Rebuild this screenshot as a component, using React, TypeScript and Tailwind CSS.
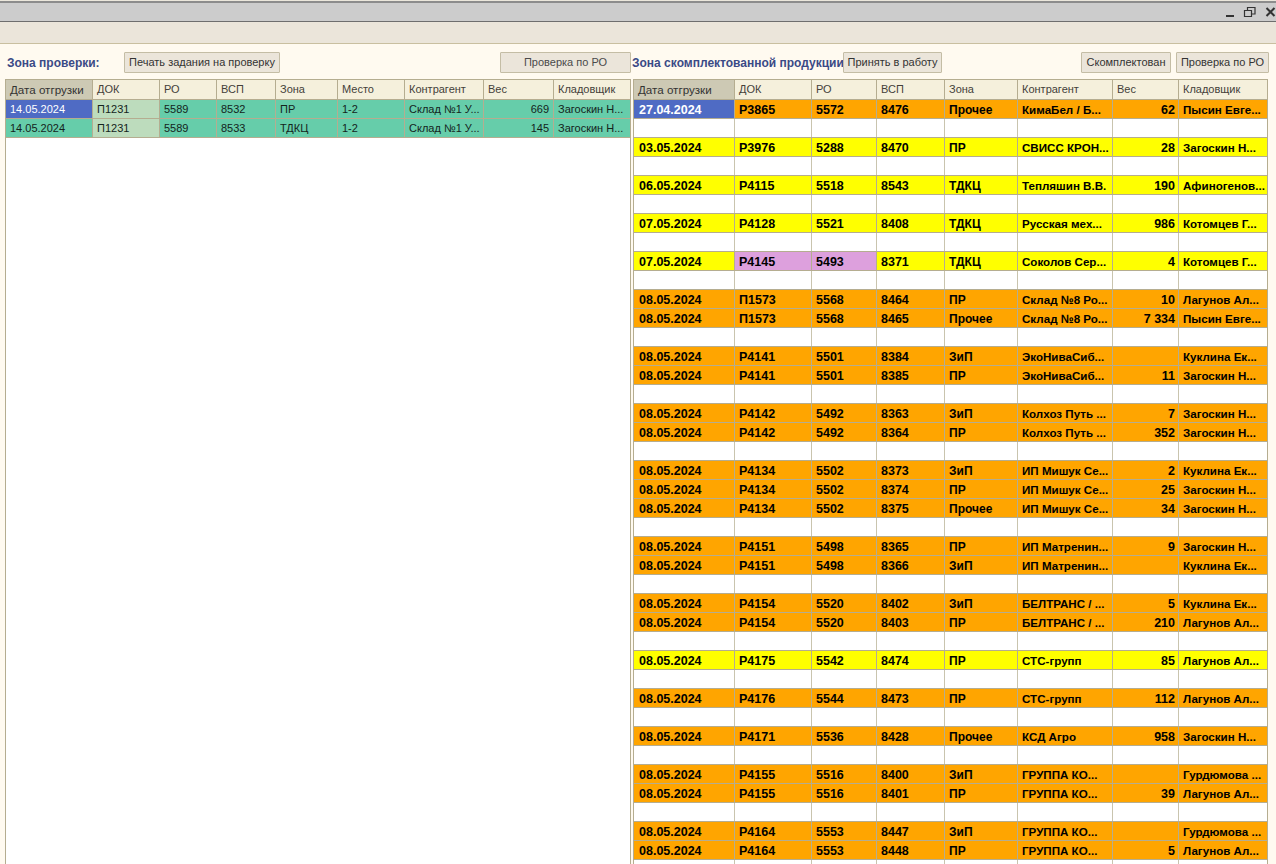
const SANS = "font-['Liberation_Sans',Arial,sans-serif]";
const LC = 'grid-cols-[87px_67px_57px_59px_62px_67px_79px_70px_77px]';
const RC = 'grid-cols-[101px_77px_65px_68px_73px_95px_66px_89px]';

const leftHead = ['Дата отгрузки', 'ДОК', 'РО', 'ВСП', 'Зона', 'Место', 'Контрагент', 'Вес', 'Кладовщик'];
const rightHead = ['Дата отгрузки', 'ДОК', 'РО', 'ВСП', 'Зона', 'Контрагент', 'Вес', 'Кладовщик'];

const leftRows = [
  ['14.05.2024', 'П1231', '5589', '8532', 'ПР', '1-2', 'Склад №1 У...', '669', 'Загоскин Н...'],
  ['14.05.2024', 'П1231', '5589', '8533', 'ТДКЦ', '1-2', 'Склад №1 У...', '145', 'Загоскин Н...'],
];

type R = [string, string, string, string, string, string, string, string, string] | null;
const y = 'y', o = 'o', p = 'p';
const rightRows: R[] = [
  [o, '27.04.2024', 'Р3865', '5572', '8476', 'Прочее', 'КимаБел / Б...', '62', 'Пысин Евге...'],
  null,
  [y, '03.05.2024', 'Р3976', '5288', '8470', 'ПР', 'СВИСС КРОН...', '28', 'Загоскин Н...'],
  null,
  [y, '06.05.2024', 'Р4115', '5518', '8543', 'ТДКЦ', 'Тепляшин В.В.', '190', 'Афиногенов...'],
  null,
  [y, '07.05.2024', 'Р4128', '5521', '8408', 'ТДКЦ', 'Русская мех...', '986', 'Котомцев Г...'],
  null,
  [p, '07.05.2024', 'Р4145', '5493', '8371', 'ТДКЦ', 'Соколов Сер...', '4', 'Котомцев Г...'],
  null,
  [o, '08.05.2024', 'П1573', '5568', '8464', 'ПР', 'Склад №8 Ро...', '10', 'Лагунов Ал...'],
  [o, '08.05.2024', 'П1573', '5568', '8465', 'Прочее', 'Склад №8 Ро...', '7 334', 'Пысин Евге...'],
  null,
  [o, '08.05.2024', 'Р4141', '5501', '8384', 'ЗиП', 'ЭкоНиваСиб...', '', 'Куклина Ек...'],
  [o, '08.05.2024', 'Р4141', '5501', '8385', 'ПР', 'ЭкоНиваСиб...', '11', 'Загоскин Н...'],
  null,
  [o, '08.05.2024', 'Р4142', '5492', '8363', 'ЗиП', 'Колхоз Путь ...', '7', 'Загоскин Н...'],
  [o, '08.05.2024', 'Р4142', '5492', '8364', 'ПР', 'Колхоз Путь ...', '352', 'Загоскин Н...'],
  null,
  [o, '08.05.2024', 'Р4134', '5502', '8373', 'ЗиП', 'ИП Мишук Се...', '2', 'Куклина Ек...'],
  [o, '08.05.2024', 'Р4134', '5502', '8374', 'ПР', 'ИП Мишук Се...', '25', 'Загоскин Н...'],
  [o, '08.05.2024', 'Р4134', '5502', '8375', 'Прочее', 'ИП Мишук Се...', '34', 'Загоскин Н...'],
  null,
  [o, '08.05.2024', 'Р4151', '5498', '8365', 'ПР', 'ИП Матренин...', '9', 'Загоскин Н...'],
  [o, '08.05.2024', 'Р4151', '5498', '8366', 'ЗиП', 'ИП Матренин...', '', 'Куклина Ек...'],
  null,
  [o, '08.05.2024', 'Р4154', '5520', '8402', 'ЗиП', 'БЕЛТРАНС / ...', '5', 'Куклина Ек...'],
  [o, '08.05.2024', 'Р4154', '5520', '8403', 'ПР', 'БЕЛТРАНС / ...', '210', 'Лагунов Ал...'],
  null,
  [y, '08.05.2024', 'Р4175', '5542', '8474', 'ПР', 'СТС-групп', '85', 'Лагунов Ал...'],
  null,
  [o, '08.05.2024', 'Р4176', '5544', '8473', 'ПР', 'СТС-групп', '112', 'Лагунов Ал...'],
  null,
  [o, '08.05.2024', 'Р4171', '5536', '8428', 'Прочее', 'КСД Агро', '958', 'Загоскин Н...'],
  null,
  [o, '08.05.2024', 'Р4155', '5516', '8400', 'ЗиП', 'ГРУППА КО...', '', 'Гурдюмова ...'],
  [o, '08.05.2024', 'Р4155', '5516', '8401', 'ПР', 'ГРУППА КО...', '39', 'Лагунов Ал...'],
  null,
  [o, '08.05.2024', 'Р4164', '5553', '8447', 'ЗиП', 'ГРУППА КО...', '', 'Гурдюмова ...'],
  [o, '08.05.2024', 'Р4164', '5553', '8448', 'ПР', 'ГРУППА КО...', '5', 'Лагунов Ал...'],
  null,
];

function Btn({ label, w, dim }: { label: string; w: string; dim?: boolean }) {
  return (
    <button className={`${w} h-[21px] shrink-0 flex items-center justify-center rounded-[1px] border border-[#c4bda5] bg-[#ebe5da] text-[11px] whitespace-nowrap ${dim ? 'text-[#4a4a4a]' : 'text-[#333333]'}`}>
      {label}
    </button>
  );
}

function Head({ cols, labels }: { cols: string; labels: string[] }) {
  return (
    <div className={`grid ${cols} h-5 border-b border-[#b5ad90] bg-[#f5f0dc] text-[11px] text-[#44413a]`}>
      {labels.map((t, i) => (
        <div key={i} className={`flex items-center pl-[4px] border-r border-[#b5ad90] whitespace-nowrap overflow-hidden ${i === 0 ? 'bg-[#cdc9b4] text-[#333333] text-[11.6px]' : ''}`}>{t}</div>
      ))}
    </div>
  );
}

function LeftRow({ row, sel }: { row: string[]; sel: boolean }) {
  return (
    <div className={`grid ${LC} h-[19px] bg-[#66cdaa] text-[11px] text-[#14241c] border-b border-[#b5ad90]`}>
      {row.map((t, i) => (
        <div key={i} className={`flex items-center pl-[4px] pr-[4px] pt-px border-r border-[#b5ad90] whitespace-nowrap overflow-hidden ${i === 7 ? 'justify-end' : ''} ${i === 0 && sel ? 'bg-[#4f6bc4] text-white' : ''} ${i === 1 ? 'bg-[#bddcbd]' : ''}`}>{t}</div>
      ))}
    </div>
  );
}

function RightRow({ row, idx }: { row: R; idx: number }) {
  if (!row) {
    return (
      <div className={`grid ${RC} h-[19px] bg-white border-b border-[#b5ad90]`}>
        {Array.from({ length: 8 }).map((_, i) => <div key={i} className="border-r border-[#c9c4ae]" />)}
      </div>
    );
  }
  const [kind, ...cells] = row;
  const bg = kind === 'o' ? 'bg-[#ffa500]' : 'bg-[#ffff00]';
  return (
    <div className={`grid ${RC} h-[19px] ${bg} font-bold text-[#000000] border-b border-[#b5ad90]`}>
      {cells.map((t, i) => {
        const size = i === 4 ? 'text-[12px] pt-px' : i === 5 || i === 7 ? 'text-[11.6px] pt-px' : 'text-[12.5px] pt-[2px]';
        return (
          <div key={i} className={`flex items-center pr-[3px] border-r border-[#b5ad90] whitespace-nowrap overflow-hidden ${size} ${i === 6 ? 'justify-end' : ''} ${i === 0 ? 'pl-[5px]' : 'pl-[4px]'} ${i === 0 && idx === 0 ? 'bg-[#4f6bc4] text-white' : ''} ${kind === 'p' && (i === 1 || i === 2) ? 'bg-[#dda0dd]' : ''}`}>{t}</div>
        );
      })}
    </div>
  );
}

export default function App() {
  return (
    <div className={`${SANS} w-[1276px] h-[864px] overflow-hidden flex flex-col bg-[#fffaf0]`}>
      <div className="h-px shrink-0 bg-[#ebe7dc]" />
      <div className="h-[2px] shrink-0 bg-[#8c8c8c]" />
      <div className="h-[19px] shrink-0 bg-[#cccccc] border-b border-b-[#6e6e6e] flex justify-end">
        <svg width="52" height="18" viewBox="0 0 52 18" className="text-[#333333] shrink-0 -mt-[3px]">
          <rect x="2" y="15" width="8" height="2" fill="currentColor" />
          <path d="M20.5 10.5h7v6h-7zM23.5 10V7.5h7.5v6.5H28" fill="none" stroke="currentColor" strokeWidth="1.2" />
          <path d="M42.5 8l8 8M50.5 8l-8 8" fill="none" stroke="currentColor" strokeWidth="2" />
        </svg>
      </div>
      <div className="h-[22px] shrink-0 bg-[#ebe5da] border-b border-[#c9bfa0]" />
      <div className="flex flex-1 min-h-0">
        <div className="w-[632px] shrink-0 flex flex-col">
          <div className="h-[35px] shrink-0 flex items-center pl-[7px] pt-[1px]">
            <span className="w-[117px] shrink-0 pt-px text-[12px] font-bold text-[#3b4a86]">Зона проверки:</span>
            <Btn label="Печать задания на проверку" w="w-[156px]" />
            <div className="w-[220px] shrink-0" />
            <Btn label="Проверка по РО" w="w-[131px]" dim />
          </div>
          <div className="flex-1 ml-[5px] mr-[1px] bg-white border-l border-r border-[#b5ad90] border-t border-t-[#b5ad90]">
            <Head cols={LC} labels={leftHead} />
            {leftRows.map((r, i) => <LeftRow key={i} row={r} sel={i === 0} />)}
          </div>
        </div>
        <div className="flex-1 flex flex-col min-w-0">
          <div className="h-[35px] shrink-0 flex items-center pt-[1px]">
            <span className="w-[211px] shrink-0 pt-px text-[12px] font-bold text-[#3b4a86] whitespace-nowrap overflow-hidden">Зона скомплектованной продукции</span>
            <Btn label="Принять в работу" w="w-[99px]" />
            <div className="w-[139px] shrink-0" />
            <Btn label="Скомплектован" w="w-[90px]" />
            <div className="w-[5px] shrink-0" />
            <Btn label="Проверка по РО" w="w-[93px]" />
          </div>
          <div className="flex-1 ml-[1px] mr-[8px] bg-white border-l border-r border-[#b5ad90] border-t border-t-[#b5ad90] overflow-hidden">
            <Head cols={RC} labels={rightHead} />
            {rightRows.map((r, i) => <RightRow key={i} row={r} idx={i} />)}
          </div>
        </div>
      </div>
    </div>
  );
}
